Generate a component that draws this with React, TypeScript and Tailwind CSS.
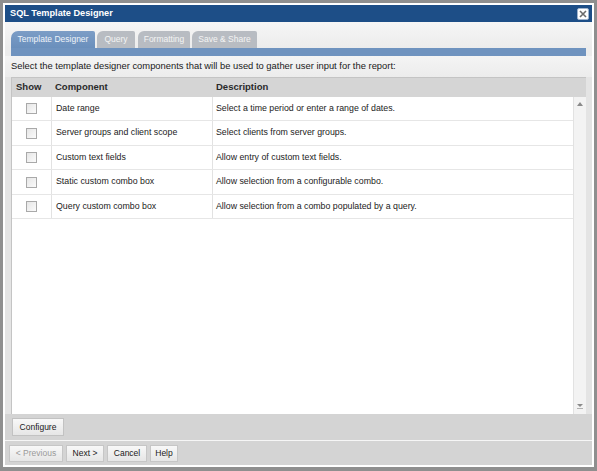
import React from "react";

const rows = [
  ["Date range", "Select a time period or enter a range of dates."],
  ["Server groups and client scope", "Select clients from server groups."],
  ["Custom text fields", "Allow entry of custom text fields."],
  ["Static custom combo box", "Allow selection from a configurable combo."],
  ["Query custom combo box", "Allow selection from a combo populated by a query."],
];

function Btn({ children, disabled, w }: { children: React.ReactNode; disabled?: boolean; w: string }) {
  return (
    <div
      className={`${w} h-[17px] flex items-center justify-center border border-[#c6c6c6] bg-gradient-to-b from-[#f8f8f8] to-[#e6e6e6] text-[8.5px] ${
        disabled ? "text-[#9a9a9a]" : "text-[#1a1a1a]"
      }`}
    >
      {children}
    </div>
  );
}

export default function App() {
  return (
    <div
      className="w-[597px] h-[471px] bg-white border-t-[3px] border-l-[3px] border-r-[3px] border-b-[4px] border-[#8f8f8f] p-[2px] overflow-hidden"
      style={{ fontFamily: '"Liberation Sans", Arial, sans-serif' }}
    >
      <div className="w-full h-full flex flex-col bg-[#ededed]">
        {/* Title bar */}
        <div className="h-[17px] bg-[#1d4e87] flex items-center justify-between pl-[5px] pr-[3px]">
          <span className="text-white font-bold text-[9.2px] leading-none">SQL Template Designer</span>
          <div className="w-[12px] h-[12px] bg-white rounded-[2px] border border-[#9fb3cc] flex items-center justify-center">
            <svg width="8" height="8" viewBox="0 0 8 8">
              <path d="M1 1L7 7M7 1L1 7" stroke="#6b6b6b" strokeWidth="1.6" />
            </svg>
          </div>
        </div>

        {/* Tabs */}
        <div className="h-[26px] bg-gradient-to-b from-[#f6f6f6] to-[#ececec] px-[6px] flex items-end">
          <div className="w-[84px] h-[17px] bg-gradient-to-b from-[#7c9dc6] to-[#6a8fbc] rounded-tl-[7px] rounded-tr-[2px] flex items-center justify-center text-[8.5px] text-[#eef3f9]">
            Template Designer
          </div>
          <div className="ml-[2px] w-[38px] h-[17px] bg-[#b8bcc2] rounded-tl-[6px] rounded-tr-[2px] flex items-center justify-center text-[8.5px] text-[#f4f4f4]">
            Query
          </div>
          <div className="ml-[3px] w-[52px] h-[17px] bg-[#b8bcc2] rounded-tl-[6px] rounded-tr-[2px] flex items-center justify-center text-[8.5px] text-[#f4f4f4]">
            Formatting
          </div>
          <div className="ml-[2px] w-[65px] h-[17px] bg-[#b8bcc2] rounded-tl-[6px] rounded-tr-[2px] flex items-center justify-center text-[8.5px] text-[#f4f4f4]">
            Save &amp; Share
          </div>
        </div>
        <div className="px-[6px] bg-[#ececec]">
          <div className="h-[8px] bg-[#6f93bf]" />
        </div>

        {/* Instruction */}
        <div className="h-[21px] px-[6px] flex items-center text-[9.4px] text-[#1a1a1a] bg-gradient-to-b from-[#f4f4f4] to-[#ececec]">
          Select the template designer components that will be used to gather user input for the report:
        </div>

        {/* Table */}
        <div className="px-[6px] bg-[#e4e4e4] h-[337px]">
          <div className="h-full flex flex-col border-t border-l border-[#c4c4c4]">
            <div className="h-[19px] bg-[#d5d5d5] flex items-center text-[9.5px] font-bold text-[#2a2a2a] shrink-0">
              <div className="w-[40px] pl-[4px]">Show</div>
              <div className="w-[161px] pl-[3px]">Component</div>
              <div className="flex-1 pl-[3px]">Description</div>
            </div>
            <div className="flex-1 flex bg-white min-h-0">
              <div className="flex-1 flex flex-col">
                {rows.map((r, i) => (
                  <div
                    key={i}
                    className={`${i % 2 === 0 ? "h-[24px]" : "h-[25px]"} flex items-center border-b border-[#e6e6e6] text-[8.8px] text-[#222]`}
                  >
                    <div className="w-[40px] h-full flex items-center justify-center border-r border-[#e2e2e2]">
                      <div className="w-[11px] h-[11px] border border-[#a9a9a9] bg-gradient-to-br from-[#e6e6e6] to-[#fbfbfb]" />
                    </div>
                    <div className="w-[161px] h-full flex items-center pl-[4px] border-r border-[#e2e2e2]">{r[0]}</div>
                    <div className="flex-1 h-full flex items-center pl-[3px]">{r[1]}</div>
                  </div>
                ))}
              </div>
              <div className="w-[13px] bg-[#f3f3f3] border-l border-[#e2e2e2] flex flex-col items-center justify-between py-[5px]">
                <svg width="6" height="4" viewBox="0 0 6 4">
                  <path d="M0 4L3 0L6 4Z" fill="#8a8a8a" />
                </svg>
                <svg width="6" height="5" viewBox="0 0 6 5">
                  <path d="M0 0L6 0L3 3Z" fill="#8a8a8a" />
                  <rect x="0" y="4" width="6" height="1" fill="#b0b0b0" />
                </svg>
              </div>
            </div>
          </div>
        </div>

        {/* Configure */}
        <div className="h-[26px] bg-[#d4d4d4] px-[6px] flex items-center">
          <div className="ml-[1px] w-[52px] h-[18px] flex items-center justify-center border border-[#c2c2c2] bg-gradient-to-b from-[#f8f8f8] to-[#e6e6e6] text-[8.5px] text-[#1a1a1a]">
            Configure
          </div>
        </div>
        <div className="h-[1px] bg-[#f6f6f6]" />
        <div className="h-[24px] bg-[#d4d4d4] pl-[4px] flex items-center gap-[3px]">
          <Btn disabled w="w-[54px]">&lt; Previous</Btn>
          <Btn w="w-[38px]">Next &gt;</Btn>
          <Btn w="w-[40px]">Cancel</Btn>
          <Btn w="w-[28px]">Help</Btn>
        </div>
      </div>
    </div>
  );
}
